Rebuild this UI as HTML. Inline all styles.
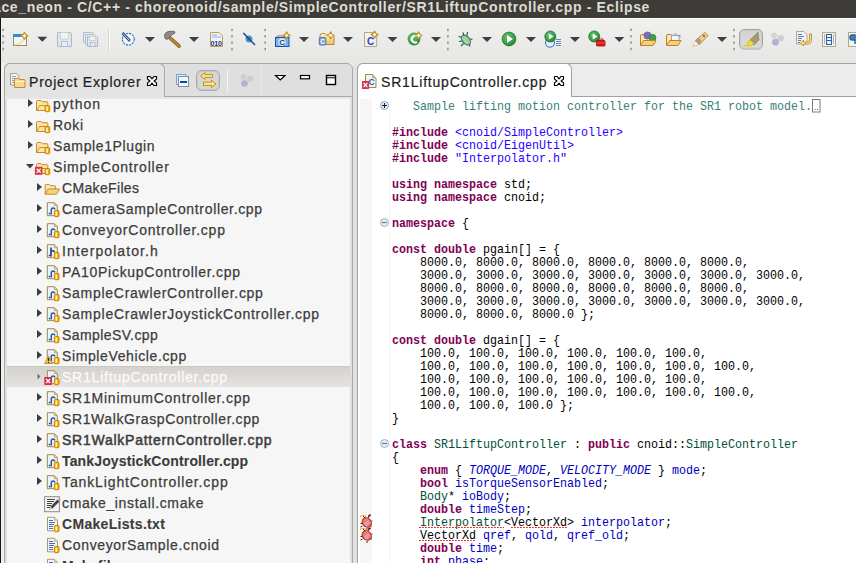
<!DOCTYPE html>
<html><head><meta charset="utf-8">
<style>
*{margin:0;padding:0;box-sizing:border-box}
html,body{width:856px;height:563px;overflow:hidden;background:#efefee;font-family:"Liberation Sans",sans-serif;position:relative}
.a{position:absolute}
#title{left:0;top:0;width:856px;height:18px;background:#3d3c38;color:#dfdbd2;font-weight:bold;font-size:14px;letter-spacing:0.64px;white-space:nowrap;line-height:14px}
#title span{position:absolute;left:-7px;top:0px}
#tb{left:0;top:18px;width:856px;height:45px;background:linear-gradient(#f2f2f1,#ecebea)}
#lborder{left:0;top:18px;width:1px;height:545px;background:#151515}
/* left panel */
#lp{left:4px;top:63px;width:349px;height:520px;border:1px solid #a8a8a8;border-radius:6px 6px 0 0;background:#dfdfdf}
#lpstrip{left:5px;top:97px;width:347px;height:2px;background:#e6e6e6}
#lphl{left:164px;top:96px;width:188px;height:1px;background:#a8a8a8}
#lptab{left:4px;top:63px;width:161px;height:34px;border:1px solid #a8a8a8;border-bottom:none;border-radius:6px 6px 0 0;background:#e3e3e3}
#tree{left:7px;top:99px;width:343px;height:470px;background:#f6f6f6;overflow:hidden}
.row{position:absolute;left:0;width:343px;height:21px;color:#3c3c3c;font-size:14px;letter-spacing:0.75px;white-space:nowrap}
.row .t{position:absolute;top:3px;line-height:16px;-webkit-text-stroke:0.25px currentColor}
.sel{background:linear-gradient(#d4d1cc,#e5e3e1);box-shadow:inset 0 1px 0 #cbc7c2}
.sel .t{color:#fbfbfb}
.b .t{font-weight:bold;letter-spacing:0.1px;-webkit-text-stroke:0.1px currentColor}
.semi .t{-webkit-text-stroke:0.5px currentColor;letter-spacing:0.6px}
#gap{left:353px;top:63px;width:4px;height:500px;background:#e2e2e2}
/* editor */
#ed{left:357px;top:63px;width:520px;height:520px;border:1px solid #a0a0a0;border-radius:6px 0 0 0;background:#ececec}
#edhl{left:571px;top:96px;width:285px;height:1px;background:#a0a0a0}
#edtab{left:357px;top:63px;width:215px;height:34px;border:1px solid #a0a0a0;border-bottom:none;border-radius:6px 6px 0 0;background:#fff}
#code{left:358px;top:97px;width:498px;height:466px;background:#fff;overflow:hidden}
#ruler{left:360px;top:99px;width:12px;height:464px;background:#f6f6f6}
#fold{left:389px;top:99px;width:1px;height:464px;background:#f4f4f4}
#lines{left:392px;top:100px;font-family:"Liberation Mono",monospace;font-size:13px;line-height:13px;transform:scaleX(0.8974);transform-origin:0 0;white-space:pre;color:#000}
.k{color:#7f0055;font-weight:bold}
.s{color:#2a00ff}
.c{color:#3a7f78}
.ty{color:#005032}
.f{color:#0000c0}
.e{color:#0000c0;font-style:italic}
</style></head><body>
<div id="title" class="a"><span>ace_neon - C/C++ - choreonoid/sample/SimpleController/SR1LiftupController.cpp - Eclipse</span></div>
<!--TB--><svg class="a" style="left:0;top:18px" width="856" height="45" viewBox="0 18 856 45">
<defs>
 <linearGradient id="tbg" x1="0" y1="0" x2="0" y2="1"><stop offset="0" stop-color="#f0f0ef"/><stop offset="1" stop-color="#e6e6e5"/></linearGradient>
 <linearGradient id="gbtn" x1="0" y1="0" x2="0" y2="1"><stop offset="0" stop-color="#d2d2d2"/><stop offset="1" stop-color="#dcdcdc"/></linearGradient>
 <radialGradient id="grn" cx="0.4" cy="0.35" r="0.7"><stop offset="0" stop-color="#6cc070"/><stop offset="1" stop-color="#1f8a32"/></radialGradient>
 <linearGradient id="fold" x1="0" y1="0" x2="0" y2="1"><stop offset="0" stop-color="#fff2c0"/><stop offset="1" stop-color="#f0c060"/></linearGradient>
 <g id="dd"><path d="M0,0 h10 l-5,5 Z" fill="#3f3f3f"/></g>
 <g id="dsep"><rect x="0" y="0" width="1.6" height="2.4" fill="#9a9488"/><rect x="0" y="6.4" width="1.6" height="2.4" fill="#9a9488"/><rect x="0" y="12.8" width="1.6" height="2.4" fill="#9a9488"/><rect x="0" y="19.2" width="1.6" height="2.4" fill="#9a9488"/></g>
 <g id="star"><path d="M0,-3.8 Q0.6,-0.6 3.8,0 Q0.6,0.6 0,3.8 Q-0.6,0.6 -3.8,0 Q-0.6,-0.6 0,-3.8 Z" fill="#fffbe0" stroke="#c09020" stroke-width="1.1"/></g>
</defs>
<rect x="0" y="18" width="856" height="1" fill="#fbfbfa"/>
<rect x="0" y="19" width="856" height="44" fill="url(#tbg)"/>
<use href="#dsep" x="2.4" y="28.6"/>
<!-- new -->
<rect x="13.5" y="34.5" width="13" height="11" fill="#eef6fe" stroke="#a08848"/>
<rect x="13" y="34" width="11" height="3" fill="#3a88d0"/>
<path d="M15,45 Q22,44 24.5,37" fill="none" stroke="#f0dc90" stroke-width="1.2"/>
<use href="#star" x="24.4" y="35.8"/>
<use href="#dd" x="37.3" y="36.8"/>
<!-- save disabled -->
<path d="M58,32.5 h12.5 l1,1 v12.5 q0,0.5 -0.5,0.5 h-13 q-0.5,0 -0.5,-0.5 v-13 q0,-0.5 0.5,-0.5Z" fill="#dfe6ee" stroke="#a8b8d0"/>
<rect x="60.5" y="32.5" width="8" height="6.5" fill="#f4f4ec" stroke="#c8ccd0" stroke-width="0.8"/>
<rect x="61.5" y="41.5" width="6" height="5" fill="#e8ecf2" stroke="#a8b8d0" stroke-width="0.8"/>
<!-- save all -->
<path d="M83.5,32.5 h9 l1,1 v9 h-10 Z" fill="#e4eaf2" stroke="#b0bed2"/>
<path d="M85.5,34.5 h9 l1,1 v9 h-10 Z" fill="#e4eaf2" stroke="#b0bed2"/>
<path d="M87.5,36.5 h9 l1,1 v9 h-10 Z" fill="#dfe6ee" stroke="#a8b8d0"/>
<rect x="89.5" y="36.5" width="6" height="4" fill="#f4f4ec" stroke="#c8ccd0" stroke-width="0.8"/>
<rect x="90.5" y="42.5" width="4.5" height="4" fill="#e8ecf2" stroke="#a8b8d0" stroke-width="0.8"/>
<!-- separator -->
<rect x="108" y="28" width="1" height="23" fill="#d6d6d4"/><rect x="109" y="28" width="1" height="23" fill="#fbfbfb"/>
<!-- build config clock -->
<circle cx="128.3" cy="39.2" r="5.9" fill="#f4f8fe" stroke="#2a70c0" stroke-width="1.1" stroke-dasharray="2.2 0.9"/>
<path d="M122.5,33 L130,41" stroke="#1e4a90" stroke-width="2.6"/>
<path d="M123,33.5 L129.5,40.5" stroke="#f0e080" stroke-width="1"/>
<use href="#dd" x="145" y="36.9"/>
<!-- hammer -->
<path d="M169,37 L179,46" stroke="#7a4a18" stroke-width="3.6" stroke-linecap="round"/>
<path d="M169,37 L179,46" stroke="#c88838" stroke-width="2" stroke-linecap="round"/>
<path d="M164.5,36.5 Q164,33 168,31.5 L173.5,31.2 Q175.5,31.5 175,33 L171.5,35 L168,39 Q165,40 164.5,36.5Z" fill="#8a8a8a" stroke="#5a5a5a" stroke-width="0.8"/>
<use href="#dd" x="189" y="37"/>
<!-- 010 -->
<path d="M210.5,32.5 h8.5 l3.5,3.5 v10.5 h-12 Z" fill="#f0f4fa" stroke="#b8a060"/>
<path d="M212,35 h5 M212,37 h9" stroke="#90b0d8" stroke-width="1"/>
<text x="210.6" y="45.6" font-family="Liberation Sans" font-weight="bold" font-size="7.2" fill="#1a3a70" letter-spacing="-0.3">010</text>
<use href="#dsep" x="231.2" y="28.7"/>
<!-- skip breakpoints -->
<circle cx="249" cy="39" r="4.2" fill="#5c9ccc" stroke="#fff" stroke-width="1"/>
<circle cx="249" cy="39" r="2.4" fill="#4888c0"/>
<path d="M243.3,33 L255,45" stroke="#1a3a7a" stroke-width="1.3"/>
<use href="#dsep" x="264.4" y="28.7"/>
<!-- new C project -->
<path d="M276,38 q0,-2.5 3,-2.5 h2 q3,0 3,2" fill="#e8b0a0" stroke="#c88878" stroke-width="0.8"/>
<rect x="275.5" y="37.5" width="13.5" height="9" fill="#78b0f0" stroke="#2050b0"/>
<circle cx="282" cy="42" r="3.8" fill="#dcecfc"/>
<text x="279.3" y="45.3" font-family="Liberation Sans" font-weight="bold" font-size="8" fill="#1a4a90">C</text>
<use href="#star" x="286.6" y="35.4"/>
<use href="#dd" x="299" y="37"/>
<!-- new source folder -->
<path d="M320,44.5 V35.5 q0,-2 2.5,-2 h2.5 l1.5,1.5 h6 q1.5,0 1.5,1.5 v8 Z" fill="url(#fold)" stroke="#c08030"/>
<rect x="319.3" y="37.5" width="6.5" height="7.5" rx="1" fill="#7aa8e0" stroke="#4a70b0" stroke-width="0.9"/>
<text x="320.2" y="44.2" font-family="Liberation Sans" font-weight="bold" font-size="6.5" fill="#fff">C</text>
<use href="#star" x="330.7" y="35.3"/>
<use href="#dd" x="343" y="37"/>
<!-- new source file -->
<path d="M364.5,32.5 h9.5 l2.7,2.7 v11.3 h-12.2 Z" fill="#eef3fa" stroke="#b8a878"/>
<text x="367" y="45" font-family="Liberation Sans" font-weight="bold" font-size="10" fill="#3a40b8">C</text>
<use href="#star" x="374.6" y="34.6"/>
<use href="#dd" x="387.5" y="37"/>
<!-- new class green -->
<circle cx="414" cy="39" r="6.4" fill="url(#grn)"/>
<path d="M417,36.5 A3.3,3.3 0 1 0 417,41.8" fill="none" stroke="#fff" stroke-width="2.2"/>
<use href="#star" x="418.5" y="35.5"/>
<use href="#dd" x="431" y="37"/>
<use href="#dsep" x="447.1" y="28.7"/>
<!-- bug -->
<path d="M458.5,36.5 l3.5,1 M459,41.5 l3,-0.5 M461,46 l2.5,-2.5 M472.5,39 l-3,0.5 M470,46.5 l-1,-3 M463,32.5 l1,3.5 M467.5,32 l-0.5,3.5" stroke="#2a5050" stroke-width="1.1"/>
<ellipse cx="466" cy="40" rx="3.6" ry="5.6" transform="rotate(-40 466 40)" fill="#9ccf90" stroke="#2a6a6a" stroke-width="1"/>
<path d="M463.5,39 l4,4" stroke="#d8f0c8" stroke-width="0.8"/>
<use href="#dd" x="482" y="37"/>
<!-- run -->
<circle cx="509" cy="39" r="6.9" fill="url(#grn)" stroke="#1a7a2a" stroke-width="0.8"/>
<path d="M507,35 L513,39 L507,43 Z" fill="#fff"/>
<use href="#dd" x="526" y="37"/>
<!-- coverage -->
<circle cx="550" cy="42.8" r="4.4" fill="#e8f0fa" stroke="#3a70c0" stroke-width="1.1"/>
<path d="M556,39.5 h5 M556,41.5 h5 M556,43.5 h5 M556,45.5 h5" stroke="#6a8ac0" stroke-width="1"/>
<circle cx="550.3" cy="36.5" r="5.5" fill="url(#grn)" stroke="#1a7a2a" stroke-width="0.8"/>
<path d="M548.8,33.5 L553.5,36.5 L548.8,39.5 Z" fill="#fff"/>
<use href="#dd" x="570" y="37"/>
<!-- external tools -->
<circle cx="594.2" cy="36.5" r="5.5" fill="url(#grn)" stroke="#1a7a2a" stroke-width="0.8"/>
<path d="M592.7,33.5 L597.4,36.5 L592.7,39.5 Z" fill="#fff"/>
<rect x="596.5" y="40.5" width="8.5" height="5.5" rx="0.8" fill="#e01818" stroke="#b00000" stroke-width="0.8"/>
<path d="M598.5,40.5 v-1.5 h4.5 v1.5" fill="none" stroke="#c00000" stroke-width="0.9"/>
<path d="M597,43 h8" stroke="#ff8080" stroke-width="0.6"/>
<use href="#dd" x="614.3" y="37"/>
<use href="#dsep" x="630.2" y="28.6"/>
<!-- open type -->
<path d="M640.5,45.5 V36 q0,-1.5 1.5,-1.5 h3 l1,1 h8 v2" fill="#fbe8b0" stroke="#c08030"/>
<circle cx="647.5" cy="35.5" r="3.6" fill="#7a6ac8" stroke="#5a4aa0" stroke-width="0.6"/>
<circle cx="652.5" cy="37.8" r="3.5" fill="#3aa048" stroke="#2a7a30" stroke-width="0.6"/>
<path d="M640.5,45.5 L643.5,40.5 H656 L653,45.5 Z" fill="#f8d070" stroke="#c08030"/>
<!-- open resource -->
<path d="M666.5,45.5 V36 q0,-1.5 1.5,-1.5 h3 l1,1 h8 v2" fill="#fbe8b0" stroke="#c08030"/>
<rect x="671.5" y="35.5" width="7.5" height="5.5" fill="#f4f6fa" stroke="#8a9ab8" stroke-width="0.9"/>
<rect x="673.5" y="33.5" width="3.5" height="2" fill="#a8b8d8"/>
<path d="M666.5,45.5 L669.5,40.5 H681 L678,45.5 Z" fill="#f8d070" stroke="#c08030"/>
<!-- search pen -->
<path d="M693,46 L696,40 L705,32.5 L708,35.5 L700,44 Z" fill="#f4d070" stroke="#c08030" stroke-width="0.9"/>
<path d="M693,46 L695,41 L698.5,44.5 Z" fill="#fff8d0"/>
<path d="M695.5,41 L699,38 L701.5,41 L698.5,44.5 Z" fill="#9a9aa8"/>
<circle cx="704" cy="36" r="0.9" fill="#2050a0"/>
<use href="#dd" x="717" y="37"/>
<use href="#dsep" x="733.2" y="28.7"/>
<!-- toggle highlight -->
<rect x="739.5" y="29.5" width="23" height="19.5" rx="4.5" fill="url(#gbtn)" stroke="#a4a4a4"/>
<rect x="740.5" y="30.5" width="21" height="17.5" rx="3.5" fill="none" stroke="#c8c8c8" stroke-width="0.8"/>
<path d="M748,43 L751,39 L758,32 L759,40 L754,45 Z" fill="#a89a70" stroke="#807050" stroke-width="0.5"/>
<path d="M746.5,45 L750,40 L754,43.5 L751,45.5 Z" fill="#f4e040" stroke="#d0b000" stroke-width="0.5"/>
<path d="M743.5,45.8 h8" stroke="#e8c800" stroke-width="1"/>
<!-- gray dots -->
<circle cx="774" cy="35.6" r="3" fill="#d4d4d4"/>
<circle cx="780.6" cy="38.2" r="3.3" fill="#d0d0d0"/>
<circle cx="775.5" cy="42.2" r="3.4" fill="#b6b0d6"/>
<!-- doc arrow -->
<path d="M796.5,31.5 h7.5 l3,3 v9.5 h-10.5 Z" fill="#eef2f8" stroke="#b8a878"/>
<path d="M798,34.5 h4 M798,36.5 h6 M798,38.5 h4 M798,40.5 h3 M798,42.5 h2" stroke="#5070b0" stroke-width="0.9"/>
<path d="M809.5,34 v6 q0,2 -2,2 h-4 v-2 l-3,3 l3,3 v-2 h4.5 q3.5,0 3.5,-3.5 v-6.5 Z" fill="#fbe8a0" stroke="#c08830" stroke-width="0.9"/>
<!-- list -->
<rect x="822.5" y="32.5" width="13" height="14" fill="#eef4fb" stroke="#b8a878"/>
<path d="M824.5,34.5 v10 M833.5,34.5 v10" stroke="#5070b0" stroke-width="1" stroke-dasharray="1 1"/>
<rect x="826.5" y="34.5" width="5" height="10" fill="#e8f0f8" stroke="#3060a0" stroke-width="1"/>
<path d="M826.5,37.5 h5 M826.5,40.5 h5" stroke="#3060a0" stroke-width="1"/>
<!-- pilcrow -->
<rect x="848.5" y="32.5" width="12" height="14" fill="#eef4fb" stroke="#b8a878"/>
<path d="M855,35 h-2.5 q-2.5,0 -2.5,2.5 q0,2.5 2.5,2.5 h2.5 Z M855,35 v9" fill="#4a80c0" stroke="#2a60a0" stroke-width="1.5"/>
</svg>
<!--/TB-->
<div id="lborder" class="a"></div>
<div id="lp" class="a"></div>
<div id="lpstrip" class="a"></div><div id="lphl" class="a"></div><div id="lptab" class="a"></div>
<!--HDR-->
<svg class="a" style="left:0;top:63px" width="356" height="34" viewBox="0 63 356 34">
 <!-- PE icon: page + folder -->
 <path d="M10.5,73.5 h6 l2.5,2.5 v9 h-8.5 Z" fill="#f2f4f8" stroke="#b0a070"/>
 <path d="M12,76.5 h4 M12,78.5 h4 M12,80.5 h3 M12,82.5 h3" stroke="#7a9ac8" stroke-width="0.9"/>
 <path d="M14.5,87.5 V79.5 q0,-1 1,-1 h3 l1,1 h4.5 q1,0 1,1 v7 Z" fill="#fad890" stroke="#c8882a"/>
 <path d="M15,81.5 h9.5" stroke="#fff4c8" stroke-width="1"/>
 <!-- close X -->
 <path d="M147.5,76.5 L150.1,76.5 L152.0,78.9 L153.9,76.5 L156.5,76.5 L156.5,79.1 L154.1,81.0 L156.5,82.9 L156.5,85.5 L153.9,85.5 L152.0,83.1 L150.1,85.5 L147.5,85.5 L147.5,82.9 L149.9,81.0 L147.5,79.1 Z" fill="#fff" stroke="#000" stroke-width="1.2" stroke-linejoin="round"/>
 <!-- collapse all -->
 <rect x="176.5" y="74.5" width="9.5" height="10" fill="#dceefa" stroke="#8aa0c0"/>
 <rect x="178.5" y="76.5" width="10" height="10" fill="#eef8ff" stroke="#7890b0"/>
 <rect x="180" y="81" width="7" height="2" fill="#1a4a80"/>
 <!-- toggle button -->
 <rect x="196.5" y="70.5" width="23" height="20" rx="5" fill="#d6d6d6" stroke="#a9a9a9"/>
 <rect x="197.5" y="71.5" width="21" height="18" rx="4" fill="none" stroke="#c6c6c6"/>
 <path d="M200.5,76 L205,72.5 V74.5 H212.5 V77.5 H205 V79.5 Z" fill="#fbe08a" stroke="#c08a10" stroke-width="0.9"/>
 <path d="M216,84 L211.5,80 V82 H203.5 V85.5 H211.5 V87.5 Z" fill="#fbe08a" stroke="#c08a10" stroke-width="0.9"/>
 <!-- separator -->
 <rect x="227" y="69" width="1" height="23" fill="#f4f4f4"/>
 <!-- dots -->
 <circle cx="243.5" cy="77" r="3" fill="#cfcfcf"/>
 <circle cx="250" cy="79" r="3" fill="#cdcdcd"/>
 <circle cx="244.5" cy="83.5" r="3.3" fill="#b4b0d0"/>
 <rect x="260" y="64" width="3" height="32" fill="#e3e3e3"/>
 <!-- view menu -->
 <path d="M275.5,75.5 h9.5 l-4.75,4.5 Z" fill="#fff" stroke="#000" stroke-width="1.2" stroke-linejoin="miter"/>
 <rect x="300.5" y="75.5" width="9" height="3.3" fill="#fff" stroke="#000" stroke-width="1.2"/>
 <rect x="326.5" y="75.5" width="9" height="9" fill="#fff" stroke="#000" stroke-width="1.4"/>
 <rect x="327" y="77.3" width="8" height="1" fill="#000"/>
 <!-- editor tab icon -->
 <path d="M365.5,74.5 h7 l3.5,3.5 v9.5 h-10.5 Z" fill="#eef3fa" stroke="#a88a40"/>
 <path d="M372.5,74.5 v3.5 h3.5" fill="#e8c880" stroke="#b8a060" stroke-width="0.8"/>
</svg>
<div class="a" style="left:29px;top:74px;font-size:14px;letter-spacing:0.8px;color:#1d1d1d;line-height:16px;white-space:nowrap;-webkit-text-stroke:0.2px #1d1d1d">Project Explorer</div>
<!--/HDR-->
<div id="tree" class="a"><div class="row" style="top:-6px"><svg class="ic" width="42" height="21" viewBox="0 0 42 21" style="position:absolute;left:13px;top:0"><path d="M8,6 L13,10 L8,14 Z" fill="#3c3c3c"/><path d="M16.5,17.5 V8.5 q0,-1 1,-1 h3.5 l1,1.2 h5 q0.8,0 0.8,0.8 v8 Z" fill="#fbe3a0" stroke="#c48a2c"/><path d="M17,17 L19.5,12.5 H27" fill="none" stroke="#c48a2c" stroke-width="0.9"/><rect x="25.1" y="12.5" width="4.6" height="6.2" rx="1" fill="#f4b000" stroke="#d08000" stroke-width="1"/><rect x="26.200000000000003" y="13.6" width="1.6" height="4.2" fill="#fff6c8"/></svg><span class="t" style="left:46px;letter-spacing:1.000px">python</span></div>
<div class="row" style="top:15px"><svg class="ic" width="42" height="21" viewBox="0 0 42 21" style="position:absolute;left:13px;top:0"><path d="M8,6 L13,10 L8,14 Z" fill="#3c3c3c"/><path d="M16.5,17.5 V8.5 q0,-1 1,-1 h3.5 l1,1.2 h5 q0.8,0 0.8,0.8 v8 Z" fill="#fbe3a0" stroke="#c48a2c"/><path d="M17,17 L19.5,12.5 H27" fill="none" stroke="#c48a2c" stroke-width="0.9"/><rect x="25.1" y="12.5" width="4.6" height="6.2" rx="1" fill="#f4b000" stroke="#d08000" stroke-width="1"/><rect x="26.200000000000003" y="13.6" width="1.6" height="4.2" fill="#fff6c8"/></svg><span class="t" style="left:46px;letter-spacing:0.660px">Roki</span></div>
<div class="row" style="top:36px"><svg class="ic" width="42" height="21" viewBox="0 0 42 21" style="position:absolute;left:13px;top:0"><path d="M8,6 L13,10 L8,14 Z" fill="#3c3c3c"/><path d="M16.5,17.5 V8.5 q0,-1 1,-1 h3.5 l1,1.2 h5 q0.8,0 0.8,0.8 v8 Z" fill="#fbe3a0" stroke="#c48a2c"/><path d="M17,17 L19.5,12.5 H27" fill="none" stroke="#c48a2c" stroke-width="0.9"/><rect x="25.1" y="12.5" width="4.6" height="6.2" rx="1" fill="#f4b000" stroke="#d08000" stroke-width="1"/><rect x="26.200000000000003" y="13.6" width="1.6" height="4.2" fill="#fff6c8"/></svg><span class="t" style="left:46px;letter-spacing:0.619px">Sample1Plugin</span></div>
<div class="row" style="top:57px"><svg class="ic" width="42" height="21" viewBox="0 0 42 21" style="position:absolute;left:13px;top:0"><path d="M6,8 L14,8 L10,12.5 Z" fill="#3c3c3c"/><path d="M16.5,17.5 V8.5 q0,-1 1,-1 h3.5 l1,1.2 h5 q0.8,0 0.8,0.8 v8 Z" fill="#fbe3a0" stroke="#c48a2c"/><path d="M17,17 L19.5,12.5 H27" fill="none" stroke="#c48a2c" stroke-width="0.9"/><rect x="25.1" y="12.5" width="4.6" height="6.2" rx="1" fill="#f4b000" stroke="#d08000" stroke-width="1"/><rect x="26.200000000000003" y="13.6" width="1.6" height="4.2" fill="#fff6c8"/><rect x="14.9" y="10.8" width="7.5" height="8" fill="#d8304a"/><path d="M16.7,12.8 l4,4 M20.7,12.8 l-4,4" stroke="#fff" stroke-width="1.3"/></svg><span class="t" style="left:46px;letter-spacing:0.821px">SimpleController</span></div>
<div class="row" style="top:78px"><svg class="ic" width="42" height="21" viewBox="0 0 42 21" style="position:absolute;left:13px;top:0"><path d="M17,6 L22,10 L17,14 Z" fill="#3c3c3c"/><path d="M25.2,17.2 V8.5 q0,-1 1,-1 h3 l1,1.2 h4.5 q0.8,0 0.8,0.8 v2 Z" fill="#fbe9b5" stroke="#c48a2c"/><path d="M25.2,17.2 L28,12 H39.5 L36.5,17.2 Z" fill="#f8d37a" stroke="#c48a2c"/></svg><span class="t" style="left:55px;letter-spacing:0.344px">CMakeFiles</span></div>
<div class="row" style="top:99px"><svg class="ic" width="42" height="21" viewBox="0 0 42 21" style="position:absolute;left:13px;top:0"><path d="M17,6 L22,10 L17,14 Z" fill="#3c3c3c"/><path d="M27.3,4.7 h7 l3,3 v10 h-10 Z" fill="#eef3fa" stroke="#a08848"/><path d="M34.3,4.7 v3 h3 Z" fill="#ead090" stroke="#c0a060" stroke-width="0.8"/><path d="M31.3,16.5 v-4.5 q0,-2 1.8,-2 q1.5,0 1.8,1.5" fill="none" stroke="#2a5aa0" stroke-width="1.5"/><rect x="28.8" y="14.8" width="1.5" height="1.5" fill="#1e3f7a"/><rect x="34.4" y="12.5" width="4.6" height="6.2" rx="1" fill="#f4b000" stroke="#d08000" stroke-width="1"/><rect x="35.5" y="13.6" width="1.6" height="4.2" fill="#fff6c8"/></svg><span class="t" style="left:55px;letter-spacing:0.658px">CameraSampleController.cpp</span></div>
<div class="row" style="top:120px"><svg class="ic" width="42" height="21" viewBox="0 0 42 21" style="position:absolute;left:13px;top:0"><path d="M17,6 L22,10 L17,14 Z" fill="#3c3c3c"/><path d="M27.3,4.7 h7 l3,3 v10 h-10 Z" fill="#eef3fa" stroke="#a08848"/><path d="M34.3,4.7 v3 h3 Z" fill="#ead090" stroke="#c0a060" stroke-width="0.8"/><path d="M31.3,16.5 v-4.5 q0,-2 1.8,-2 q1.5,0 1.8,1.5" fill="none" stroke="#2a5aa0" stroke-width="1.5"/><rect x="28.8" y="14.8" width="1.5" height="1.5" fill="#1e3f7a"/><rect x="34.4" y="12.5" width="4.6" height="6.2" rx="1" fill="#f4b000" stroke="#d08000" stroke-width="1"/><rect x="35.5" y="13.6" width="1.6" height="4.2" fill="#fff6c8"/></svg><span class="t" style="left:55px;letter-spacing:0.795px">ConveyorController.cpp</span></div>
<div class="row" style="top:141px"><svg class="ic" width="42" height="21" viewBox="0 0 42 21" style="position:absolute;left:13px;top:0"><path d="M17,6 L22,10 L17,14 Z" fill="#3c3c3c"/><path d="M27.3,4.7 h7 l3,3 v10 h-10 Z" fill="#eef3fa" stroke="#a08848"/><path d="M34.3,4.7 v3 h3 Z" fill="#ead090" stroke="#c0a060" stroke-width="0.8"/><path d="M31,7.5 v9 M31,12.5 q0,-1.8 1.8,-1.8 q1.5,0 1.7,1.5" fill="none" stroke="#1e3f7a" stroke-width="1.6"/><rect x="28.8" y="14.8" width="1.5" height="1.5" fill="#1e3f7a"/><rect x="34.4" y="12.5" width="4.6" height="6.2" rx="1" fill="#f4b000" stroke="#d08000" stroke-width="1"/><rect x="35.5" y="13.6" width="1.6" height="4.2" fill="#fff6c8"/></svg><span class="t" style="left:55px;letter-spacing:1.082px">Interpolator.h</span></div>
<div class="row" style="top:162px"><svg class="ic" width="42" height="21" viewBox="0 0 42 21" style="position:absolute;left:13px;top:0"><path d="M17,6 L22,10 L17,14 Z" fill="#3c3c3c"/><path d="M27.3,4.7 h7 l3,3 v10 h-10 Z" fill="#eef3fa" stroke="#a08848"/><path d="M34.3,4.7 v3 h3 Z" fill="#ead090" stroke="#c0a060" stroke-width="0.8"/><path d="M31.3,16.5 v-4.5 q0,-2 1.8,-2 q1.5,0 1.8,1.5" fill="none" stroke="#2a5aa0" stroke-width="1.5"/><rect x="28.8" y="14.8" width="1.5" height="1.5" fill="#1e3f7a"/><rect x="34.4" y="12.5" width="4.6" height="6.2" rx="1" fill="#f4b000" stroke="#d08000" stroke-width="1"/><rect x="35.5" y="13.6" width="1.6" height="4.2" fill="#fff6c8"/></svg><span class="t" style="left:55px;letter-spacing:0.712px">PA10PickupController.cpp</span></div>
<div class="row" style="top:183px"><svg class="ic" width="42" height="21" viewBox="0 0 42 21" style="position:absolute;left:13px;top:0"><path d="M17,6 L22,10 L17,14 Z" fill="#3c3c3c"/><path d="M27.3,4.7 h7 l3,3 v10 h-10 Z" fill="#eef3fa" stroke="#a08848"/><path d="M34.3,4.7 v3 h3 Z" fill="#ead090" stroke="#c0a060" stroke-width="0.8"/><path d="M31.3,16.5 v-4.5 q0,-2 1.8,-2 q1.5,0 1.8,1.5" fill="none" stroke="#2a5aa0" stroke-width="1.5"/><rect x="28.8" y="14.8" width="1.5" height="1.5" fill="#1e3f7a"/><rect x="34.4" y="12.5" width="4.6" height="6.2" rx="1" fill="#f4b000" stroke="#d08000" stroke-width="1"/><rect x="35.5" y="13.6" width="1.6" height="4.2" fill="#fff6c8"/></svg><span class="t" style="left:55px;letter-spacing:0.724px">SampleCrawlerController.cpp</span></div>
<div class="row" style="top:204px"><svg class="ic" width="42" height="21" viewBox="0 0 42 21" style="position:absolute;left:13px;top:0"><path d="M17,6 L22,10 L17,14 Z" fill="#3c3c3c"/><path d="M27.3,4.7 h7 l3,3 v10 h-10 Z" fill="#eef3fa" stroke="#a08848"/><path d="M34.3,4.7 v3 h3 Z" fill="#ead090" stroke="#c0a060" stroke-width="0.8"/><path d="M31.3,16.5 v-4.5 q0,-2 1.8,-2 q1.5,0 1.8,1.5" fill="none" stroke="#2a5aa0" stroke-width="1.5"/><rect x="28.8" y="14.8" width="1.5" height="1.5" fill="#1e3f7a"/><rect x="34.4" y="12.5" width="4.6" height="6.2" rx="1" fill="#f4b000" stroke="#d08000" stroke-width="1"/><rect x="35.5" y="13.6" width="1.6" height="4.2" fill="#fff6c8"/></svg><span class="t" style="left:55px;letter-spacing:0.742px">SampleCrawlerJoystickController.cpp</span></div>
<div class="row" style="top:225px"><svg class="ic" width="42" height="21" viewBox="0 0 42 21" style="position:absolute;left:13px;top:0"><path d="M17,6 L22,10 L17,14 Z" fill="#3c3c3c"/><path d="M27.3,4.7 h7 l3,3 v10 h-10 Z" fill="#eef3fa" stroke="#a08848"/><path d="M34.3,4.7 v3 h3 Z" fill="#ead090" stroke="#c0a060" stroke-width="0.8"/><path d="M31.3,16.5 v-4.5 q0,-2 1.8,-2 q1.5,0 1.8,1.5" fill="none" stroke="#2a5aa0" stroke-width="1.5"/><rect x="28.8" y="14.8" width="1.5" height="1.5" fill="#1e3f7a"/><rect x="34.4" y="12.5" width="4.6" height="6.2" rx="1" fill="#f4b000" stroke="#d08000" stroke-width="1"/><rect x="35.5" y="13.6" width="1.6" height="4.2" fill="#fff6c8"/></svg><span class="t" style="left:55px;letter-spacing:0.406px">SampleSV.cpp</span></div>
<div class="row" style="top:246px"><svg class="ic" width="42" height="21" viewBox="0 0 42 21" style="position:absolute;left:13px;top:0"><path d="M17,6 L22,10 L17,14 Z" fill="#3c3c3c"/><path d="M27.3,4.7 h7 l3,3 v10 h-10 Z" fill="#eef3fa" stroke="#a08848"/><path d="M34.3,4.7 v3 h3 Z" fill="#ead090" stroke="#c0a060" stroke-width="0.8"/><path d="M31.3,16.5 v-4.5 q0,-2 1.8,-2 q1.5,0 1.8,1.5" fill="none" stroke="#2a5aa0" stroke-width="1.5"/><rect x="28.8" y="14.8" width="1.5" height="1.5" fill="#1e3f7a"/><rect x="34.4" y="12.5" width="4.6" height="6.2" rx="1" fill="#f4b000" stroke="#d08000" stroke-width="1"/><rect x="35.5" y="13.6" width="1.6" height="4.2" fill="#fff6c8"/><path d="M28.5,11 L32.5,18.5 H24.5 Z" fill="#f5c242" stroke="#b88a20" stroke-width="0.8"/><path d="M28.5,13 v3 M28.5,17 v1" stroke="#222" stroke-width="1.2"/></svg><span class="t" style="left:55px;letter-spacing:0.618px">SimpleVehicle.cpp</span></div>
<div class="row sel" style="top:267px"><svg class="ic" width="42" height="21" viewBox="0 0 42 21" style="position:absolute;left:13px;top:0"><path d="M17.5,7.5 L20.5,10.5 L17.5,13.5 Z" fill="#707070"/><path d="M27.3,4.7 h7 l3,3 v10 h-10 Z" fill="#eef3fa" stroke="#a08848"/><path d="M34.3,4.7 v3 h3 Z" fill="#ead090" stroke="#c0a060" stroke-width="0.8"/><path d="M31.3,16.5 v-4.5 q0,-2 1.8,-2 q1.5,0 1.8,1.5" fill="none" stroke="#2a5aa0" stroke-width="1.5"/><rect x="28.8" y="14.8" width="1.5" height="1.5" fill="#1e3f7a"/><rect x="34.4" y="12.5" width="4.6" height="6.2" rx="1" fill="#f4b000" stroke="#d08000" stroke-width="1"/><rect x="35.5" y="13.6" width="1.6" height="4.2" fill="#fff6c8"/><rect x="24.3" y="11" width="7.5" height="8" fill="#d8304a"/><path d="M26.1,13 l4,4 M30.1,13 l-4,4" stroke="#fff" stroke-width="1.3"/></svg><span class="t" style="left:55px;letter-spacing:0.783px">SR1LiftupController.cpp</span></div>
<div class="row" style="top:288px"><svg class="ic" width="42" height="21" viewBox="0 0 42 21" style="position:absolute;left:13px;top:0"><path d="M17,6 L22,10 L17,14 Z" fill="#3c3c3c"/><path d="M27.3,4.7 h7 l3,3 v10 h-10 Z" fill="#eef3fa" stroke="#a08848"/><path d="M34.3,4.7 v3 h3 Z" fill="#ead090" stroke="#c0a060" stroke-width="0.8"/><path d="M31.3,16.5 v-4.5 q0,-2 1.8,-2 q1.5,0 1.8,1.5" fill="none" stroke="#2a5aa0" stroke-width="1.5"/><rect x="28.8" y="14.8" width="1.5" height="1.5" fill="#1e3f7a"/><rect x="34.4" y="12.5" width="4.6" height="6.2" rx="1" fill="#f4b000" stroke="#d08000" stroke-width="1"/><rect x="35.5" y="13.6" width="1.6" height="4.2" fill="#fff6c8"/></svg><span class="t" style="left:55px;letter-spacing:0.765px">SR1MinimumController.cpp</span></div>
<div class="row" style="top:309px"><svg class="ic" width="42" height="21" viewBox="0 0 42 21" style="position:absolute;left:13px;top:0"><path d="M17,6 L22,10 L17,14 Z" fill="#3c3c3c"/><path d="M27.3,4.7 h7 l3,3 v10 h-10 Z" fill="#eef3fa" stroke="#a08848"/><path d="M34.3,4.7 v3 h3 Z" fill="#ead090" stroke="#c0a060" stroke-width="0.8"/><path d="M31.3,16.5 v-4.5 q0,-2 1.8,-2 q1.5,0 1.8,1.5" fill="none" stroke="#2a5aa0" stroke-width="1.5"/><rect x="28.8" y="14.8" width="1.5" height="1.5" fill="#1e3f7a"/><rect x="34.4" y="12.5" width="4.6" height="6.2" rx="1" fill="#f4b000" stroke="#d08000" stroke-width="1"/><rect x="35.5" y="13.6" width="1.6" height="4.2" fill="#fff6c8"/></svg><span class="t" style="left:55px;letter-spacing:0.603px">SR1WalkGraspController.cpp</span></div>
<div class="row semi" style="top:330px"><svg class="ic" width="42" height="21" viewBox="0 0 42 21" style="position:absolute;left:13px;top:0"><path d="M17,6 L22,10 L17,14 Z" fill="#3c3c3c"/><path d="M27.3,4.7 h7 l3,3 v10 h-10 Z" fill="#eef3fa" stroke="#a08848"/><path d="M34.3,4.7 v3 h3 Z" fill="#ead090" stroke="#c0a060" stroke-width="0.8"/><path d="M31.3,16.5 v-4.5 q0,-2 1.8,-2 q1.5,0 1.8,1.5" fill="none" stroke="#2a5aa0" stroke-width="1.5"/><rect x="28.8" y="14.8" width="1.5" height="1.5" fill="#1e3f7a"/><rect x="34.4" y="12.5" width="4.6" height="6.2" rx="1" fill="#f4b000" stroke="#d08000" stroke-width="1"/><rect x="35.5" y="13.6" width="1.6" height="4.2" fill="#fff6c8"/></svg><span class="t" style="left:55px;letter-spacing:0.746px">SR1WalkPatternController.cpp</span></div>
<div class="row b" style="top:351px"><svg class="ic" width="42" height="21" viewBox="0 0 42 21" style="position:absolute;left:13px;top:0"><path d="M17,6 L22,10 L17,14 Z" fill="#3c3c3c"/><path d="M27.3,4.7 h7 l3,3 v10 h-10 Z" fill="#eef3fa" stroke="#a08848"/><path d="M34.3,4.7 v3 h3 Z" fill="#ead090" stroke="#c0a060" stroke-width="0.8"/><path d="M31.3,16.5 v-4.5 q0,-2 1.8,-2 q1.5,0 1.8,1.5" fill="none" stroke="#2a5aa0" stroke-width="1.5"/><rect x="28.8" y="14.8" width="1.5" height="1.5" fill="#1e3f7a"/><rect x="34.4" y="12.5" width="4.6" height="6.2" rx="1" fill="#f4b000" stroke="#d08000" stroke-width="1"/><rect x="35.5" y="13.6" width="1.6" height="4.2" fill="#fff6c8"/></svg><span class="t" style="left:55px;letter-spacing:0.141px">TankJoystickController.cpp</span></div>
<div class="row" style="top:372px"><svg class="ic" width="42" height="21" viewBox="0 0 42 21" style="position:absolute;left:13px;top:0"><path d="M17,6 L22,10 L17,14 Z" fill="#3c3c3c"/><path d="M27.3,4.7 h7 l3,3 v10 h-10 Z" fill="#eef3fa" stroke="#a08848"/><path d="M34.3,4.7 v3 h3 Z" fill="#ead090" stroke="#c0a060" stroke-width="0.8"/><path d="M31.3,16.5 v-4.5 q0,-2 1.8,-2 q1.5,0 1.8,1.5" fill="none" stroke="#2a5aa0" stroke-width="1.5"/><rect x="28.8" y="14.8" width="1.5" height="1.5" fill="#1e3f7a"/><rect x="34.4" y="12.5" width="4.6" height="6.2" rx="1" fill="#f4b000" stroke="#d08000" stroke-width="1"/><rect x="35.5" y="13.6" width="1.6" height="4.2" fill="#fff6c8"/></svg><span class="t" style="left:55px;letter-spacing:0.881px">TankLightController.cpp</span></div>
<div class="row" style="top:393px"><svg class="ic" width="42" height="21" viewBox="0 0 42 21" style="position:absolute;left:13px;top:0"><rect x="24.6" y="4.7" width="14.8" height="15" fill="#f4f4f4" stroke="#8c8c8c"/><path d="M27,7.5 h8 M27,9.5 h7 M27,11.5 h5 M27,13.5 h4 M27,15.5 h3" stroke="#444" stroke-width="1"/><path d="M29.5,17.5 l1,-3 l7,-7 l2,2 l-7,7 Z" fill="#444" /><path d="M37.5,7.5 l1.5,-1.5 l2,2 l-1.5,1.5 Z" fill="#e090c0"/><path d="M29.5,17.5 l1,-3 l2,2 Z" fill="#f0d080"/></svg><span class="t" style="left:55px;letter-spacing:0.642px">cmake_install.cmake</span></div>
<div class="row b" style="top:414px"><svg class="ic" width="42" height="21" viewBox="0 0 42 21" style="position:absolute;left:13px;top:0"><path d="M27.5,4.3 h7 l3,3 v10.5 h-10 Z" fill="#f4f6fa" stroke="#a89a6a"/><path d="M34.5,4.3 v3 h3" fill="#e6d6a6" stroke="#c0a870" stroke-width="0.8"/><path d="M29,7.5 h4 M29,9.5 h6 M29,11.5 h5 M29,13.5 h4 M29,15.5 h4" stroke="#4a6ab0" stroke-width="1"/><rect x="34.4" y="12.5" width="4.6" height="6.2" rx="1" fill="#f4b000" stroke="#d08000" stroke-width="1"/><rect x="35.5" y="13.6" width="1.6" height="4.2" fill="#fff6c8"/></svg><span class="t" style="left:55px;letter-spacing:0.307px">CMakeLists.txt</span></div>
<div class="row" style="top:435px"><svg class="ic" width="42" height="21" viewBox="0 0 42 21" style="position:absolute;left:13px;top:0"><path d="M27.5,4.3 h7 l3,3 v10.5 h-10 Z" fill="#f4f6fa" stroke="#a89a6a"/><path d="M34.5,4.3 v3 h3" fill="#e6d6a6" stroke="#c0a870" stroke-width="0.8"/><path d="M29,7.5 h4 M29,9.5 h6 M29,11.5 h5 M29,13.5 h4 M29,15.5 h4" stroke="#4a6ab0" stroke-width="1"/><rect x="34.4" y="12.5" width="4.6" height="6.2" rx="1" fill="#f4b000" stroke="#d08000" stroke-width="1"/><rect x="35.5" y="13.6" width="1.6" height="4.2" fill="#fff6c8"/></svg><span class="t" style="left:55px;letter-spacing:0.650px">ConveyorSample.cnoid</span></div>
<div class="row b" style="top:456px"><svg class="ic" width="42" height="21" viewBox="0 0 42 21" style="position:absolute;left:13px;top:0"><path d="M27.5,4.3 h7 l3,3 v10.5 h-10 Z" fill="#f4f6fa" stroke="#a89a6a"/><path d="M34.5,4.3 v3 h3" fill="#e6d6a6" stroke="#c0a870" stroke-width="0.8"/><path d="M29,7.5 h4 M29,9.5 h6 M29,11.5 h5 M29,13.5 h4 M29,15.5 h4" stroke="#4a6ab0" stroke-width="1"/><rect x="34.4" y="12.5" width="4.6" height="6.2" rx="1" fill="#f4b000" stroke="#d08000" stroke-width="1"/><rect x="35.5" y="13.6" width="1.6" height="4.2" fill="#fff6c8"/></svg><span class="t" style="left:55px;letter-spacing:0.200px">Makefile</span></div></div><!--/TREE-->
<div id="gap" class="a"></div><div id="ed" class="a"></div><div id="edhl" class="a"></div>
<div id="edtab" class="a"></div>
<div id="code" class="a"></div>
<div id="ruler" class="a"></div>
<div id="fold" class="a"></div>
<div id="lines" class="a">   <span class="c">Sample lifting motion controller for the SR1 robot model.</span>

<span class="k">#include</span> <span class="s">&lt;cnoid/SimpleController&gt;</span>
<span class="k">#include</span> <span class="s">&lt;cnoid/EigenUtil&gt;</span>
<span class="k">#include</span> <span class="s">"Interpolator.h"</span>

<span class="k">using</span> <span class="k">namespace</span> std;
<span class="k">using</span> <span class="k">namespace</span> cnoid;

<span class="k">namespace</span> {

<span class="k">const</span> <span class="k">double</span> pgain[] = {
    8000.0, 8000.0, 8000.0, 8000.0, 8000.0, 8000.0,
    3000.0, 3000.0, 3000.0, 3000.0, 3000.0, 3000.0, 3000.0,
    8000.0, 8000.0, 8000.0, 8000.0, 8000.0, 8000.0,
    3000.0, 3000.0, 3000.0, 3000.0, 3000.0, 3000.0, 3000.0,
    8000.0, 8000.0, 8000.0 };

<span class="k">const</span> <span class="k">double</span> dgain[] = {
    100.0, 100.0, 100.0, 100.0, 100.0, 100.0,
    100.0, 100.0, 100.0, 100.0, 100.0, 100.0, 100.0,
    100.0, 100.0, 100.0, 100.0, 100.0, 100.0,
    100.0, 100.0, 100.0, 100.0, 100.0, 100.0, 100.0,
    100.0, 100.0, 100.0 };
}

<span class="k">class</span> <span class="ty">SR1LiftupController</span> : <span class="k">public</span> cnoid::<span class="ty">SimpleController</span>
{
    <span class="k">enum</span> { <span class="e">TORQUE_MODE</span>, <span class="e">VELOCITY_MODE</span> } <span class="f">mode</span>;
    <span class="k">bool</span> <span class="f">isTorqueSensorEnabled</span>;
    <span class="ty">Body</span>* <span class="f">ioBody</span>;
    <span class="k">double</span> <span class="f">timeStep</span>;
    <span class="ty">Interpolator</span>&lt;VectorXd&gt; <span class="f">interpolator</span>;
    VectorXd <span class="f">qref</span>, <span class="f">qold</span>, <span class="f">qref_old</span>;
    <span class="k">double</span> <span class="f">time</span>;
    <span class="k">int</span> <span class="f">phase</span>;</div>
<!--EDH-->
<svg class="a" style="left:358px;top:64px" width="498" height="499" viewBox="358 64 498 499">
 <!-- editor tab icon -->
 <path d="M365.5,74.5 h7 l3.5,3.5 v9.5 h-10.5 Z" fill="#eef3fa" stroke="#a88a40"/>
 <path d="M372.5,74.5 v3.5 h3.5 Z" fill="#e8c880" stroke="#b8a060" stroke-width="0.8"/>
 <text x="368.6" y="85" font-family="Liberation Sans" font-weight="bold" font-size="8.5" fill="#2060a8">C</text>
 <rect x="362" y="81" width="7" height="8" fill="#d8304a"/>
 <path d="M363.6,82.8 l3.8,4.4 M367.4,82.8 l-3.8,4.4" stroke="#fff" stroke-width="1.3"/>
 <!-- close -->
 <path d="M554.5,76.5 L557.1,76.5 L559.0,78.9 L560.9,76.5 L563.5,76.5 L563.5,79.1 L561.1,81.0 L563.5,82.9 L563.5,85.5 L560.9,85.5 L559.0,83.1 L557.1,85.5 L554.5,85.5 L554.5,82.9 L556.9,81.0 L554.5,79.1 Z" fill="#fff" stroke="#000" stroke-width="1.2" stroke-linejoin="round"/>
 <!-- fold plus -->
 <circle cx="384.5" cy="105.5" r="4" fill="#e4eef6" stroke="#8aa0b8" stroke-width="0.9"/>
 <path d="M382,105.5 h5 M384.5,103 v5" stroke="#102040" stroke-width="1.1"/>
 <!-- fold minus namespace -->
 <circle cx="384.5" cy="222.5" r="4" fill="#dfedf8" stroke="#9aacbe" stroke-width="0.9"/>
 <path d="M382,222.5 h5" stroke="#687c96" stroke-width="1.1"/>
 <!-- fold minus class -->
 <circle cx="384.5" cy="443.5" r="4" fill="#dfedf8" stroke="#9aacbe" stroke-width="0.9"/>
 <path d="M382,443.5 h5" stroke="#687c96" stroke-width="1.1"/>

 <!-- squiggles -->
 <path d="M419,527.5 H504 M511,527.5 H567 M419,540.5 H476" stroke="#ff1a1a" stroke-width="1" stroke-dasharray="1.8 1.2"/>
 <!-- bug markers -->
 <g id="bugm">
  <path d="M360.5,517 q0,-1.5 1.5,-1.5 h2 q1.5,0 1.5,1.5 v3 q0,1.5 -1.5,1.5 h-2 v2" fill="none" stroke="#f0b020" stroke-width="1.2"/>
  <path d="M365,518 l-2,-2 M368,518 l1,-3 l2,0 M362.5,523.5 l-2,0 M362.5,526 l-2,1 M371.5,521 l1,0 M370.5,525 l1,1.5 M367,528 l0,2" stroke="#901010" stroke-width="1"/>
  <ellipse cx="366.8" cy="522.5" rx="4.2" ry="5" transform="rotate(-40 366.8 522.5)" fill="#e08080" stroke="#a01818" stroke-width="1"/>
  <path d="M364.5,524.5 l4,-4 M365.5,526 l4,-4" stroke="#fff0f0" stroke-width="0.6"/>
 </g>
 <use href="#bugm" x="0" y="13"/>
 <!-- [..] box after comment -->
 <rect x="812.5" y="99.5" width="7.5" height="12.5" fill="#fff" stroke="#7a7a7a"/>
 <rect x="814.5" y="109" width="1" height="1" fill="#505050"/><rect x="817" y="109" width="1" height="1" fill="#505050"/>
</svg>
<div class="a" style="left:381px;top:74px;font-size:14px;letter-spacing:0.8px;color:#1d1d1d;line-height:16px;white-space:nowrap;-webkit-text-stroke:0.2px #1d1d1d">SR1LiftupController.cpp</div>
<!--/EDH-->
</body></html>
